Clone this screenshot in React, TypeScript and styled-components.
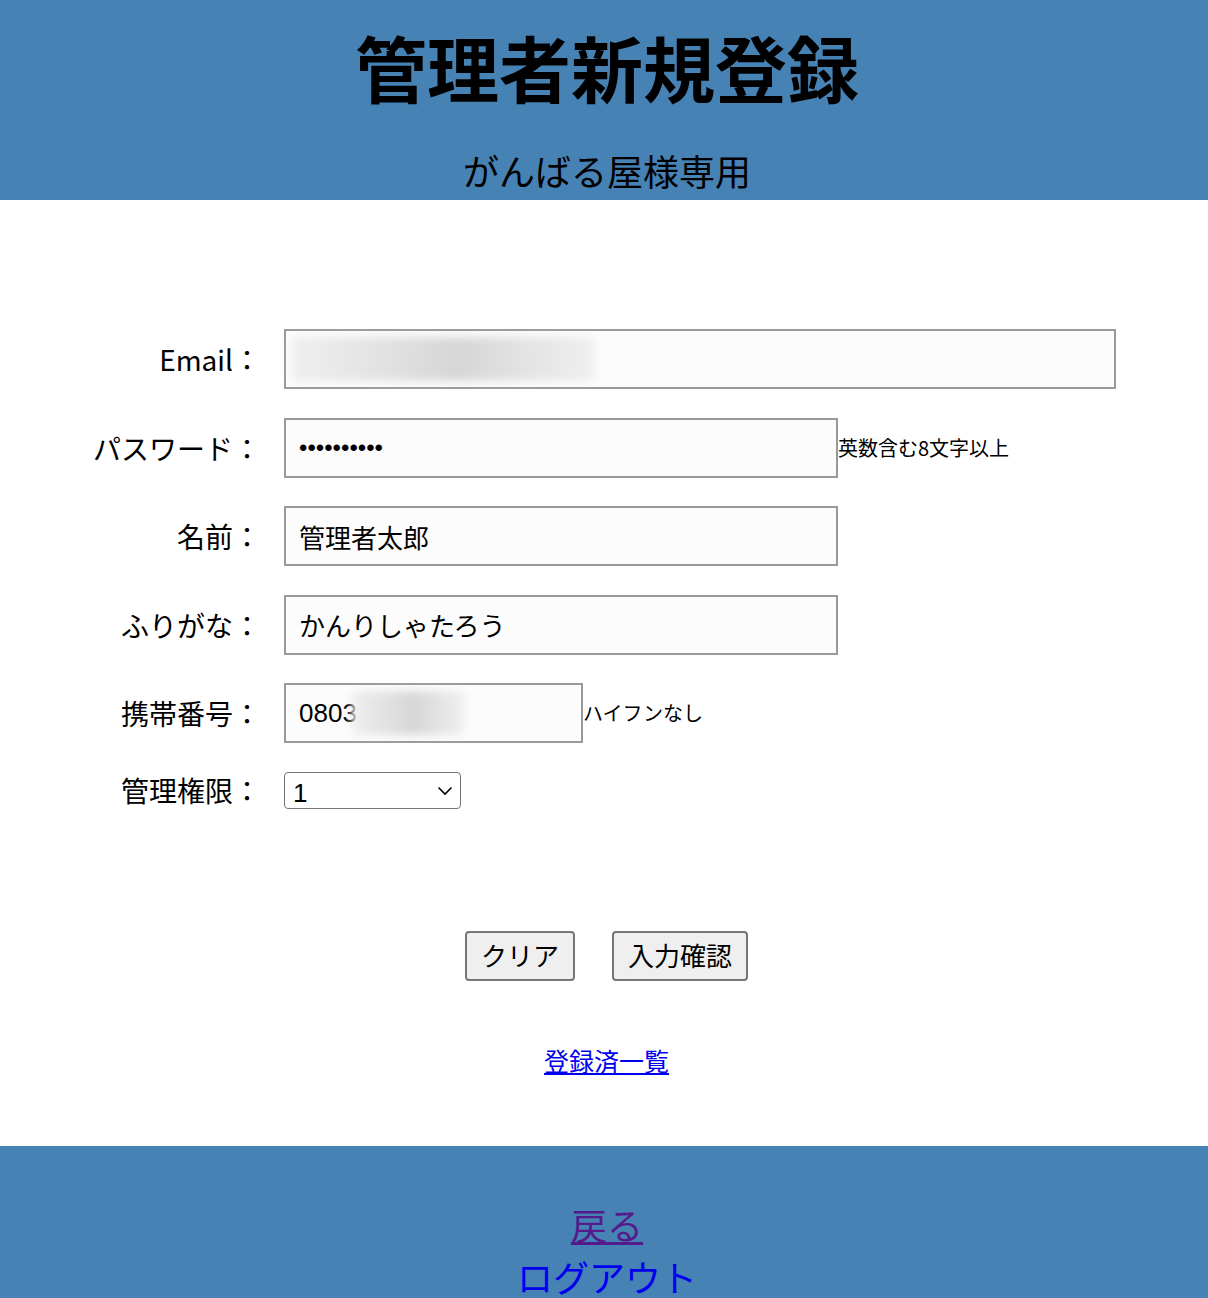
import styled, { createGlobalStyle } from "styled-components";

const GlobalStyle = createGlobalStyle`
  html, body {
    margin: 0;
    padding: 0;
    background: #fff;
  }
  body {
    font-family: "Noto Sans CJK JP", sans-serif;
    color: #000;
  }
`;

const App = () => {
  return (
    <>
      <GlobalStyle />
      <Header>
        <h1>管理者新規登録</h1>
        <p>がんばる屋様専用</p>
      </Header>
      <Main>
        <Form onSubmit={(e) => e.preventDefault()}>
          <Label>Email：</Label>
          <Field>
            <InputWrap>
              <Input type="email" $width={832} defaultValue="" />
              <Blur $left={8} $width={302} />
            </InputWrap>
          </Field>

          <Label>パスワード：</Label>
          <Field>
            <Input type="password" $width={554} defaultValue="abcdef1234" />
            <Note>英数含む8文字以上</Note>
          </Field>

          <Label>名前：</Label>
          <Field>
            <Input type="text" $width={554} defaultValue="管理者太郎" />
          </Field>

          <Label>ふりがな：</Label>
          <Field>
            <Input type="text" $width={554} defaultValue="かんりしゃたろう" />
          </Field>

          <Label>携帯番号：</Label>
          <Field>
            <InputWrap>
              <Input type="tel" $width={299} defaultValue="0803" />
              <Blur $left={68} $width={112} />
            </InputWrap>
            <Note>ハイフンなし</Note>
          </Field>

          <Label>管理権限：</Label>
          <Field>
            <SelectWrap>
              <Select defaultValue="1">
                <option value="1">1</option>
                <option value="2">2</option>
              </Select>
              <Chevron width="16" height="10" viewBox="0 0 16 10">
                <path d="M1.5 1.5 L8 8 L14.5 1.5" fill="none" stroke="#000" strokeWidth="1.6" />
              </Chevron>
            </SelectWrap>
          </Field>
        </Form>

        <Buttons>
          <Button type="button">クリア</Button>
          <Button type="button">入力確認</Button>
        </Buttons>

        <ListLink href="#list">登録済一覧</ListLink>
      </Main>
      <Footer>
        <FooterLink href="#back" $visited>
          戻る
        </FooterLink>
        <FooterLink href="#logout">ログアウト</FooterLink>
      </Footer>
    </>
  );
};

const Header = styled.header`
  background: #4682b4;
  height: 200px;
  padding-left: 6px;
  display: flex;
  flex-direction: column;
  align-items: center;
  h1 {
    margin: 23px 0 0;
    font-size: 72px;
    line-height: 86px;
    font-weight: 700;
  }
  p {
    margin: 39px 0 0;
    font-size: 36px;
    line-height: 44px;
    font-weight: 400;
  }
`;

const Main = styled.main`
  padding: 129px 0 71px 5px;
  display: flex;
  flex-direction: column;
  align-items: center;
`;

const Form = styled.form`
  align-self: stretch;
  display: grid;
  grid-template-columns: 256px auto;
  column-gap: 23px;
  row-gap: 28.6px;
  align-items: center;
`;

const Label = styled.label`
  text-align: right;
  white-space: nowrap;
  font-size: 28px;
  line-height: 36px;
`;

const Field = styled.div`
  display: flex;
  align-items: center;
`;

const InputWrap = styled.div`
  position: relative;
  display: flex;
`;

const Input = styled.input<{ $width: number }>`
  box-sizing: border-box;
  width: ${(p) => p.$width}px;
  height: 60px;
  border: 2px solid #999;
  background: #fcfcfc;
  padding: 0 13px;
  font-family: "Liberation Sans", "Noto Sans CJK JP", sans-serif;
  font-size: 26px;
  color: #000;
  outline: none;
  &[type="password"] {
    font-size: 24px;
    letter-spacing: 0;
  }
`;

const Blur = styled.span<{ $left: number; $width: number }>`
  position: absolute;
  top: 8px;
  left: ${(p) => p.$left}px;
  width: ${(p) => p.$width}px;
  height: 44px;
  background: linear-gradient(
    90deg,
    #efefef 0%,
    #e2e2e2 30%,
    #d6d6d6 55%,
    #e2e2e2 75%,
    #efefef 100%
  );
  filter: blur(4px);
  pointer-events: none;
`;

const Note = styled.span`
  font-size: 20px;
  line-height: 28px;
  white-space: nowrap;
`;

const SelectWrap = styled.div`
  position: relative;
  display: flex;
`;

const Select = styled.select`
  appearance: none;
  box-sizing: border-box;
  width: 177px;
  height: 37px;
  border: 1.5px solid #767676;
  border-radius: 4px;
  background: #fff;
  padding: 5px 8px 0;
  font-family: "Liberation Sans", sans-serif;
  font-size: 26px;
  color: #000;
  outline: none;
`;

const Chevron = styled.svg`
  position: absolute;
  right: 8px;
  top: 14px;
  pointer-events: none;
`;

const Buttons = styled.div`
  margin-top: 122px;
  display: flex;
  gap: 37px;
`;

const Button = styled.button`
  box-sizing: border-box;
  height: 50px;
  padding: 0 14px 2px;
  border: 2px solid #767676;
  border-radius: 4px;
  background: #efefef;
  font-family: "Noto Sans CJK JP", sans-serif;
  font-size: 26px;
  color: #000;
`;

const ListLink = styled.a`
  margin-top: 64px;
  font-size: 25px;
  line-height: 30px;
  color: #0000ee;
`;

const Footer = styled.footer`
  background: #4682b4;
  padding: 52px 0 40px 6px;
  display: flex;
  flex-direction: column;
  align-items: center;
`;

const FooterLink = styled.a<{ $visited?: boolean }>`
  font-size: 36px;
  line-height: 52px;
  color: ${(p) => (p.$visited ? "#551a8b" : "#0000ee")};
  text-decoration: ${(p) => (p.$visited ? "underline" : "none")};
`;

export default App;
